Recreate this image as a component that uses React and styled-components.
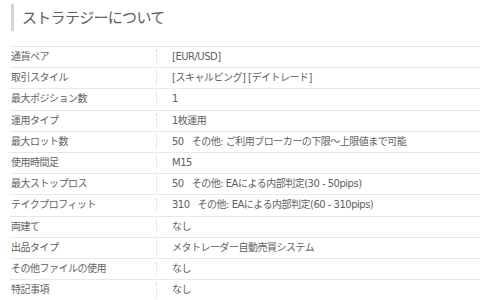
import React from "react";
import styled, { createGlobalStyle } from "styled-components";

const Global = createGlobalStyle`
  html, body { margin: 0; padding: 0; background: #fff; }
  body { font-family: "DejaVu Sans", "Noto Sans CJK JP", sans-serif; color: #555; }
`;

const Page = styled.div`
  padding: 4px 0 0 10px;
  width: 470px;
  overflow: hidden;
`;

const Heading = styled.h2`
  margin: 0 0 15px 1px;
  padding: 2px 0 0 8px;
  height: 25px;
  border-left: 3px solid #d4d4d4;
  font-family: "Noto Sans CJK JP", sans-serif;
  font-weight: 400;
  font-size: 15px;
  letter-spacing: -0.7px;
  line-height: 22px;
  color: #5e5e5e;
`;

const Table = styled.div`
  border-top: 1px solid #f1e4e8;
  width: 480px;
`;

const Row = styled.div`
  display: grid;
  grid-template-columns: 146px 1fr;
  height: 20.2px;
  border-bottom: 1px solid ${(p) => (p.$alt ? "#e9e9e9" : "#f1e4e8")};
  align-items: center;
  font-size: 10px;
  letter-spacing: -0.5px;
  line-height: 14px;
`;

const Label = styled.div`
  padding-left: 1px;
  color: #5f5f5f;
  white-space: nowrap;
`;

const Value = styled.div`
  border-left: 1px dotted #d6d6d6;
  padding-left: 15px;
  height: 14px;
  color: #5f5f5f;
  white-space: nowrap;
`;

const Gap = styled.span`
  display: inline-block;
  width: 8px;
`;

const rows = [
  ["通貨ペア", "[EUR/USD]"],
  ["取引スタイル", "[スキャルピング] [デイトレード]"],
  ["最大ポジション数", "1"],
  ["運用タイプ", "1枚運用"],
  ["最大ロット数", ["50", "その他: ご利用ブローカーの下限〜上限値まで可能"]],
  ["使用時間足", "M15"],
  ["最大ストップロス", ["50", "その他: EAによる内部判定(30 - 50pips)"]],
  ["テイクプロフィット", ["310", "その他: EAによる内部判定(60 - 310pips)"]],
  ["両建て", "なし"],
  ["出品タイプ", "メタトレーダー自動売買システム"],
  ["その他ファイルの使用", "なし"],
  ["特記事項", "なし"],
];

export default function App() {
  return (
    <>
      <Global />
      <Page>
        <Heading>ストラテジーについて</Heading>
        <Table>
          {rows.map(([k, v], i) => (
            <Row key={k} $alt={i % 2 === 0}>
              <Label>{k}</Label>
              <Value>
                {Array.isArray(v) ? (
                  <>
                    {v[0]}
                    <Gap />
                    {v[1]}
                  </>
                ) : (
                  v
                )}
              </Value>
            </Row>
          ))}
        </Table>
      </Page>
    </>
  );
}
